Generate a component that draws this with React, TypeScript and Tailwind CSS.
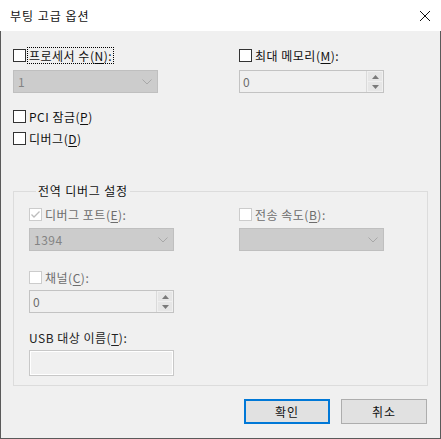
import type { ReactNode } from "react";

const font = { fontFamily: '"Noto Sans CJK KR", "Noto Sans", sans-serif' };

// underlined access key, e.g. (N)
const Key = ({ k }: { k: string }) => (
  <>
    (<span className="underline underline-offset-2 decoration-1">{k}</span>)
  </>
);

const Check = ({ checked = false, disabled = false }: { checked?: boolean; disabled?: boolean }) => (
  <span
    className={`flex items-center justify-center w-[13px] h-[13px] border bg-white shrink-0 ${
      disabled ? "border-[#cccccc]" : "border-[#333333]"
    }`}
  >
    {checked && (
      <svg width="11" height="11" viewBox="0 0 11 11">
        <path d="M1.5 5.5 L4 8 L9.5 2.5" fill="none" stroke="#bcbcbc" strokeWidth="1.3" />
      </svg>
    )}
  </span>
);

const CheckRow = ({
  children,
  checked,
  disabled,
  focus,
}: {
  children: ReactNode;
  checked?: boolean;
  disabled?: boolean;
  focus?: boolean;
}) => (
  <div className="flex items-center h-[17px]">
    <Check checked={checked} disabled={disabled} />
    <span
      className={`ml-[2px] px-[1px] leading-[15px] text-[12px] tracking-[0.5px] whitespace-nowrap ${
        disabled ? "text-[#6d6d6d]" : "text-[#111111]"
      } ${focus ? "outline outline-1 outline-dotted outline-black" : ""}`}
    >
      {children}
    </span>
  </div>
);

const Combo = ({ value }: { value?: string }) => (
  <div className="flex items-center justify-between h-[23px] w-[145px] bg-[#cccccc] border border-[#bfbfbf] pl-[4px] pr-[5px]">
    <span className="text-[12px] tracking-[0.5px] text-[#838383]">{value}</span>
    <svg width="10" height="6" viewBox="0 0 10 6">
      <path d="M0.5 0.5 L5 5 L9.5 0.5" fill="none" stroke="#a8a8a8" strokeWidth="1" />
    </svg>
  </div>
);

const Spin = ({ value }: { value: string }) => (
  <div className="flex h-[23px] w-[145px] border border-[#c3c3c3] bg-[#f0f0f0]">
    <div className="flex-1 flex items-center pl-[3px] text-[12px] text-[#6d6d6d]">{value}</div>
    <div className="flex flex-col w-[17px] border-l border-[#dadada] p-[1px] gap-[1px]">
      <div className="flex-1 flex items-center justify-center bg-[#e6e6e6]">
        <svg width="7" height="4" viewBox="0 0 7 4">
          <path d="M0 4 L3.5 0 L7 4 Z" fill="#7a7a7a" />
        </svg>
      </div>
      <div className="flex-1 flex items-center justify-center bg-[#e6e6e6]">
        <svg width="7" height="4" viewBox="0 0 7 4">
          <path d="M0 0 L3.5 4 L7 0 Z" fill="#7a7a7a" />
        </svg>
      </div>
    </div>
  </div>
);

const App = () => {
  return (
    <div className="w-[441px] h-[439px] flex flex-col bg-[#f0f0f0] text-[#111111]" style={font}>
      {/* Title bar */}
      <div className="flex items-center justify-between h-[31px] bg-white pl-[10px] pr-[11px]">
        <span className="text-[12px] tracking-[1px]">부팅 고급 옵션</span>
        <svg width="10" height="10" viewBox="0 0 10 10">
          <path d="M0 0 L10 10 M10 0 L0 10" stroke="#111111" strokeWidth="1" />
        </svg>
      </div>

      {/* Body */}
      <div className="flex-1 flex flex-col border-x border-b border-[#5a5a5a] pl-[12px] pr-[12px]">
        <div className="flex gap-[81px] pt-[16px]">
          <div className="flex flex-col gap-[6px] w-[145px]">
            <CheckRow focus>
              프로세서 수<Key k="N" />:
            </CheckRow>
            <Combo value="1" />
          </div>
          <div className="flex flex-col gap-[6px] w-[145px]">
            <CheckRow>
              최대 메모리<Key k="M" />:
            </CheckRow>
            <Spin value="0" />
          </div>
        </div>

        <div className="flex flex-col gap-[5px] mt-[15px]">
          <CheckRow>
            PCI 잠금<Key k="P" />
          </CheckRow>
          <CheckRow>
            디버그<Key k="D" />
          </CheckRow>
        </div>

        {/* Global debug settings */}
        <fieldset className="mt-[36px] w-[415px] border border-[#dcdcdc] pl-[15px] pb-[9px]">
          <legend className="ml-[7px] px-[2px] text-[12px] leading-[16px] tracking-[0.8px]">전역 디버그 설정</legend>
          <div className="flex gap-[65px] mt-[7px]">
            <div className="flex flex-col gap-[5px] w-[145px]">
              <CheckRow checked disabled>
                디버그 포트<Key k="E" />:
              </CheckRow>
              <Combo value="1394" />
            </div>
            <div className="flex flex-col gap-[5px] w-[145px]">
              <CheckRow disabled>
                전송 속도<Key k="B" />:
              </CheckRow>
              <Combo />
            </div>
          </div>
          <div className="flex flex-col gap-[4px] mt-[18px] w-[145px]">
            <CheckRow disabled>
              채널<Key k="C" />:
            </CheckRow>
            <Spin value="0" />
          </div>
          <div className="flex flex-col gap-[4px] mt-[16px] w-[145px]">
            <div className="h-[17px] flex items-center text-[12px] tracking-[0.5px] text-[#222222] whitespace-nowrap">
              USB 대상 이름<Key k="T" />:
            </div>
            <div className="h-[26px] border border-[#c8c8c8] bg-[#f0f0f0] shadow-[inset_0_0_0_1px_#ffffff]" />
          </div>
        </fieldset>

        {/* Buttons */}
        <div className="flex justify-end gap-[11px] mt-[13px] pr-[1px]">
          <button className="w-[86px] h-[25px] bg-[#e1e1e1] border-2 border-[#0078d7] text-[12px] tracking-[1px]">확인</button>
          <button className="w-[86px] h-[25px] bg-[#e1e1e1] border border-[#adadad] text-[12px] tracking-[1px]">취소</button>
        </div>
      </div>
    </div>
  );
};

export default App;
